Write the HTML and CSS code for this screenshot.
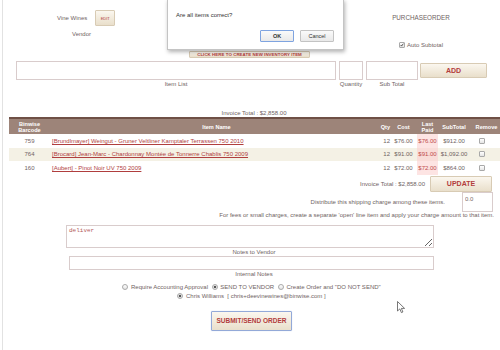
FILE: index.html
```html
<!DOCTYPE html>
<html>
<head>
<meta charset="utf-8">
<link rel="stylesheet" href="styles.css">
</head>
<body>
<div class="page">
  <div class="top">
    <div class="vendor">
      <div class="vendor-row">
        <span>Vine Wines</span>
        <button class="btn btn-edit">EDIT</button>
      </div>
      <div class="vendor-label">Vendor</div>
    </div>
    <div class="po">
      <div class="po-title">PURCHASEORDER</div>
      <label class="auto"><input type="checkbox" class="chk" checked> Auto Subtotal</label>
    </div>
  </div>

  <div class="create-row"><button class="btn btn-create">CLICK HERE TO CREATE NEW INVENTORY ITEM</button></div>

  <div class="entry">
    <div class="field"><input class="inp inp-item" type="text"><span class="lbl">Item List</span></div>
    <div class="field"><input class="inp inp-qty" type="text"><span class="lbl">Quantity</span></div>
    <div class="field"><input class="inp inp-sub" type="text"><span class="lbl">Sub Total</span></div>
    <button class="btn btn-add">ADD</button>
  </div>

  <div class="total-top">Invoice Total : $2,858.00</div>

  <table class="items">
    <thead>
      <tr>
        <th class="c-bc">Binwise<br>Barcode</th>
        <th class="c-name">Item Name</th>
        <th class="c-qty">Qty</th>
        <th class="c-cost">Cost</th>
        <th class="c-last">Last<br>Paid</th>
        <th class="c-sub">SubTotal</th>
        <th class="c-rm">Remove</th>
      </tr>
    </thead>
    <tbody>
      <tr>
        <td class="c-bc">759</td>
        <td class="c-name"><a href="#">[Brundlmayer] Weingut - Gruner Veltliner Kamptaler Terrassen 750 2010</a></td>
        <td class="c-qty">12</td>
        <td class="c-cost">$76.00</td>
        <td class="c-last">$76.00</td>
        <td class="c-sub">$912.00</td>
        <td class="c-rm"><input type="checkbox" class="chk"></td>
      </tr>
      <tr class="alt">
        <td class="c-bc">764</td>
        <td class="c-name"><a href="#">[Brocard] Jean-Marc - Chardonnay Montée de Tonnerre Chablis 750 2009</a></td>
        <td class="c-qty">12</td>
        <td class="c-cost">$91.00</td>
        <td class="c-last">$91.00</td>
        <td class="c-sub">$1,092.00</td>
        <td class="c-rm"><input type="checkbox" class="chk"></td>
      </tr>
      <tr>
        <td class="c-bc">160</td>
        <td class="c-name"><a href="#">[Aubert] - Pinot Noir UV 750 2009</a></td>
        <td class="c-qty">12</td>
        <td class="c-cost">$72.00</td>
        <td class="c-last">$72.00</td>
        <td class="c-sub">$864.00</td>
        <td class="c-rm"><input type="checkbox" class="chk"></td>
      </tr>
    </tbody>
  </table>

  <div class="update-row">
    <span>Invoice Total : $2,858.00</span>
    <button class="btn btn-update">UPDATE</button>
  </div>

  <div class="ship-row">
    <span>Distribute this shipping charge among these items.</span>
    <input class="inp inp-ship" type="text" value="0.0">
  </div>

  <div class="fees">For fees or small charges, create a separate 'open' line item and apply your charge amount to that item.</div>

  <textarea class="inp notes">deliver</textarea>
  <div class="clabel">Notes to Vendor</div>
  <input class="inp internal" type="text">
  <div class="clabel">Internal Notes</div>

  <div class="radios">
    <label><input type="radio" name="mode" class="rad"> Require Accounting Approval</label>
    <label><input type="radio" name="mode" class="rad" checked> SEND TO VENDOR</label>
    <label><input type="radio" name="mode" class="rad"> Create Order and "DO NOT SEND"</label>
  </div>
  <div class="radios radios-2">
    <label><input type="radio" name="who" class="rad" checked> Chris Williams&nbsp; [ chris+deevinewines@binwise.com ]</label>
  </div>

  <div class="submit-row"><button class="btn btn-submit">SUBMIT/SEND ORDER</button></div>

  <div class="dialog">
    <div class="dialog-msg">Are all items correct?</div>
    <div class="dialog-btns">
      <button class="dbtn dbtn-ok">OK</button>
      <button class="dbtn">Cancel</button>
    </div>
  </div>

  <svg class="cursor" width="9" height="13" viewBox="0 0 9 13">
    <path d="M0.5 0.5 L0.5 10 L2.8 7.9 L4.4 11.6 L5.9 11 L4.4 7.4 L7.6 7.4 Z" fill="#fff" stroke="#555" stroke-width="0.8" stroke-linejoin="round"/>
  </svg>
</div>
</body>
</html>
```

FILE: styles.css
```css
* { box-sizing: border-box; }
html, body { margin: 0; padding: 0; background: #fff; }
body {
  font-family: "Liberation Sans", Arial, sans-serif;
  font-size: 6px;
  color: #6f6363;
  width: 500px;
  height: 350px;
  overflow: hidden;
}
.page {
  position: relative;
  margin-left: 2px;
  border-left: 1px solid #e2e2e2;
  width: 498px;
  height: 350px;
  overflow: hidden;
}

.btn {
  font-family: "Liberation Sans", Arial, sans-serif;
  font-weight: bold;
  color: #b23c3c;
  background: linear-gradient(#fbf7ef, #e9dfcb);
  border: 1px solid #d8cbb4;
  border-radius: 1px;
  padding: 0;
  cursor: pointer;
}

/* top */
.top {
  display: flex;
  justify-content: space-between;
  height: 50px;
}
.vendor { padding-top: 10px; }
.vendor-row {
  display: flex;
  align-items: center;
  margin-left: 54px;
  height: 16px;
}
.btn-edit {
  margin-left: 8px;
  width: 20px;
  height: 16px;
  font-size: 4px;
  font-weight: normal;
}
.vendor-label {
  margin-left: 69px;
  margin-top: 4px;
  line-height: 8px;
}
.po {
  width: 60px;
  margin-right: 49px;
  display: flex;
  flex-direction: column;
  align-items: center;
}
.po-title {
  margin-top: 14px;
  line-height: 8px;
  font-size: 6.3px;
}
.auto {
  margin-top: 19px;
  line-height: 8px;
  display: flex;
  align-items: center;
  gap: 2px;
}

/* custom checkbox / radio */
.chk {
  appearance: none;
  -webkit-appearance: none;
  width: 6px;
  height: 6px;
  margin: 0;
  border: 1px solid #a9a9a9;
  border-radius: 1px;
  background: linear-gradient(#ffffff, #e4e4e4);
  vertical-align: middle;
}
.chk:checked {
  background: url("data:image/svg+xml,%3Csvg xmlns='http://www.w3.org/2000/svg' viewBox='0 0 6 6'%3E%3Cpath d='M1 3 L2.4 4.6 L5 1' fill='none' stroke='%23333' stroke-width='1.2'/%3E%3C/svg%3E") center / 100% 100% no-repeat, linear-gradient(#ffffff, #e4e4e4);
}
.rad {
  appearance: none;
  -webkit-appearance: none;
  width: 6px;
  height: 6px;
  margin: 0 1px 0 0;
  border: 1px solid #a9a9a9;
  border-radius: 50%;
  background: linear-gradient(#ffffff, #e4e4e4);
  vertical-align: -1px;
}
.rad:checked {
  background: radial-gradient(circle, #555 0 1.3px, #e8e8e8 1.6px);
}

.create-row {
  display: flex;
  justify-content: center;
  margin-top: 1px;
  padding-right: 4px;
}
.btn-create {
  width: 121px;
  height: 7px;
  font-size: 4.4px;
  line-height: 5px;
  letter-spacing: 0.05px;
  white-space: nowrap;
}

/* entry row */
.entry {
  display: flex;
  align-items: flex-start;
  margin-top: 3px;
  margin-left: 13px;
}
.field {
  display: flex;
  flex-direction: column;
  align-items: center;
  margin-right: 3px;
}
.lbl { line-height: 8px; }
.inp {
  border: 1px solid #d9cccc;
  background: #fff;
  font-family: "Liberation Sans", Arial, sans-serif;
  font-size: 6px;
  color: #b05a5a;
  padding: 1px 2px;
  outline: none;
}
.inp-item { width: 320px; height: 19px; }
.inp-qty { width: 24px; height: 19px; }
.inp-sub { width: 52px; height: 19px; }
.btn-add {
  margin-left: -1px;
  margin-top: 2px;
  width: 67px;
  height: 15px;
  font-size: 7px;
}

.total-top {
  margin-top: 21px;
  line-height: 8px;
  text-align: center;
  padding-left: 5px;
}

/* table */
.items {
  margin-left: 6px;
  width: 494px;
  border-collapse: collapse;
  table-layout: fixed;
}
.items th {
  background: #9d8479;
  color: #fff;
  font-weight: bold;
  font-size: 5.6px;
  line-height: 6px;
  height: 16px;
  border-top: 2px solid #6f5046;
  padding: 0;
}
.items td {
  height: 13.5px;
  padding: 0;
  white-space: nowrap;
}
.items tr.alt td { background: #f4f1e5; }
.items td.c-last { background: #fde4e3; color: #c04a4a; }
.items tr.alt td.c-last { background: #f9dcd8; }
.c-bc { width: 41px; text-align: center; }
.c-name { width: 329px; }
.items td.c-name { padding-left: 2px; }
.items th.c-name { text-align: center; padding-left: 4px; }
.c-name a { color: #b03e3e; text-decoration: underline; }
.c-qty { width: 11px; text-align: right; }
.c-cost { width: 27px; text-align: center; }
.c-last { width: 21px; text-align: center; }
.c-sub { width: 32px; text-align: center; }
.c-rm { width: 33px; text-align: center; }
.items td.c-rm { text-align: left; padding-left: 9px; }

.update-row {
  display: flex;
  justify-content: flex-end;
  align-items: center;
  margin-top: 1px;
  margin-right: 8px;
  gap: 5px;
}
.btn-update {
  width: 62px;
  height: 16px;
  font-size: 7px;
}
.ship-row {
  display: flex;
  justify-content: flex-end;
  align-items: center;
  margin-right: 7px;
  gap: 17px;
}
.inp-ship { width: 31px; height: 20px; color: #7a6a6a; padding: 1px 2px 6px; }
.fees {
  text-align: right;
  padding-right: 6px;
  line-height: 7px;
}
.notes {
  display: block;
  margin: 6px 0 0 63px;
  width: 368px;
  height: 23px;
  resize: vertical;
  font-family: "Liberation Mono", "Courier New", monospace;
  font-size: 6px;
  color: #b35a5a;
  padding: 1px 2px;
}
.clabel {
  text-align: center;
  line-height: 8px;
  padding-left: 5px;
}
.internal {
  display: block;
  margin: 0 0 0 66px;
  width: 365px;
  height: 14px;
}
.radios {
  text-align: center;
  margin-top: 5px;
  line-height: 9px;
}
.radios label { margin: 0 1px; }
.radios-2 { margin-top: 0; }
.submit-row {
  display: flex;
  justify-content: center;
  margin-top: 10px;
}
.btn-submit {
  width: 81px;
  height: 20px;
  font-size: 6.5px;
  border: 1px solid #93a9d8;
  box-shadow: 0 0 1px #b6c6e6;
}

/* dialog */
.dialog {
  position: absolute;
  left: 164px;
  top: -1px;
  width: 177px;
  height: 51px;
  background: #fff;
  border: 1px solid #c4c4c4;
  box-shadow: 1px 2px 4px rgba(0,0,0,0.3);
  color: #333;
}
.dialog-msg {
  padding: 12px 0 0 8px;
  line-height: 7px;
}
.dialog-btns {
  display: flex;
  justify-content: flex-end;
  gap: 6px;
  margin-top: 11px;
  padding-right: 9px;
}
.dbtn {
  width: 34px;
  height: 12px;
  padding: 0;
  font-family: "Liberation Sans", Arial, sans-serif;
  font-size: 5.5px;
  color: #333;
  background: linear-gradient(#fafafa, #e9e9e9);
  border: 1px solid #c3c3c3;
  border-radius: 1px;
}
.dbtn-ok {
  font-weight: bold;
  border-color: #7fa4e0;
}

.cursor {
  position: absolute;
  left: 394px;
  top: 301px;
}
```
